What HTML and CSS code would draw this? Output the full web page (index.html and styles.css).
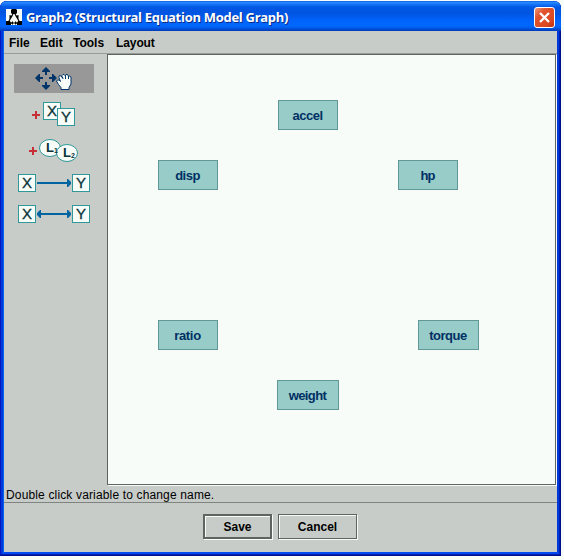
FILE: index.html
```html
<!DOCTYPE html>
<html lang="en">
<head>
<meta charset="utf-8">
<title>Graph2 (Structural Equation Model Graph)</title>
<link rel="stylesheet" href="styles.css">
</head>
<body>
<div class="window">
  <header class="titlebar">
    <svg class="app-icon" width="16" height="16" viewBox="0 0 16 16">
      <rect width="16" height="16" fill="#f8fcf8"/>
      <path d="M7 5L3 12M9 5L13 12M4 14H12" stroke="#000" stroke-width="1.200" fill="none"/>
      <path d="M6 0h4l1 1v3l-1 1h-4l-1-1v-3zM3.500 6l3 1-3 3zM12.500 6l-3 1 3 3zM0 12h4l1 2v2h-5zM16 12h-4l-1 2v2h5zM5 14l2-2v4zM11 14l-2-2v4z" fill="#000"/>
    </svg>
    <span class="title">Graph2 (Structural Equation Model Graph)</span>
    <button class="close" aria-label="Close">
      <svg width="19" height="19" viewBox="0 0 19 19"><path d="M5 5L14 14M14 5L5 14" stroke="#fff" stroke-width="2.300"/></svg>
    </button>
  </header>
  <div class="client">
    <nav class="menubar">
      <span class="m-file">File</span><span class="m-edit">Edit</span><span class="m-tools">Tools</span><span class="m-layout">Layout</span>
    </nav>
    <main class="workspace">
      <aside class="tools">
        <svg class="tool selected" width="80" height="29" viewBox="0 0 80 29">
          <g fill="#003468">
            <path d="M32 3l4 4v1h-3v3h-2v-3h-3v-1zM32 26l4-4v-1h-3v-3h-2v3h-3v1zM21 14l4-4h1v3h3v2h-3v3h-1zM43 14l-4-4h-1v3h-3v2h3v3h1z"/>
          </g>
          <path d="M47 25.500v-2l-2.500-3-2-3.500 1-1h1.500l1.500 1.500-1.500-4v-1.500l1-.5 1.500 1 .5 1v-2l1-1h1l1 1 1-1h1.500l1 2 1-.5 1.500 1v7l-2 3.500v2z" fill="#f8fcf8" stroke="#003468" stroke-width="1"/>
          <path d="M48.500 13l.5 2M51.500 11v4M54.500 12v3" stroke="#003468" stroke-width="1"/>
        </svg>
        <svg class="tool t-measured" width="80" height="28" viewBox="0 0 80 28">
          <path d="M18 15h8M22 11v8" stroke="#c83038" stroke-width="2"/>
          <g class="boxes"><rect x="29.500" y="2.500" width="17" height="17"/><rect x="43.500" y="8.500" width="17" height="17"/></g>
          <g class="letters"><text x="38" y="16">X</text><text x="52" y="22">Y</text></g>
        </svg>
        <svg class="tool t-latent" width="80" height="26" viewBox="0 0 80 26">
          <path d="M15 14h8M19 10v8" stroke="#c83038" stroke-width="2"/>
          <g class="boxes"><ellipse cx="36" cy="11" rx="10.500" ry="8.500"/><ellipse cx="53" cy="16" rx="10.500" ry="8.500"/></g>
          <g class="latent"><text x="32" y="15">L</text><text x="49" y="20">L</text></g>
          <g class="subs"><text x="40" y="16">1</text><text x="57" y="21">2</text></g>
        </svg>
        <svg class="tool t-directed" width="80" height="20" viewBox="0 0 80 20">
          <g class="boxes"><rect x="4.500" y="1.500" width="17" height="17"/><rect x="58.500" y="1.500" width="17" height="17"/></g>
          <g class="letters"><text x="13" y="15">X</text><text x="67" y="15">Y</text></g>
          <path d="M23 9h30v-3h1l3 3v2l-3 3h-1v-3h-30z" fill="#0064a0"/>
        </svg>
        <svg class="tool t-bidirected" width="80" height="20" viewBox="0 0 80 20">
          <g class="boxes"><rect x="4.500" y="1.500" width="17" height="17"/><rect x="58.500" y="1.500" width="17" height="17"/></g>
          <g class="letters"><text x="13" y="15">X</text><text x="67" y="15">Y</text></g>
          <path d="M23 9l3-3h1v3h26v-3h1l3 3v2l-3 3h-1v-3h-26v3h-1l-3-3z" fill="#0064a0"/>
        </svg>
      </aside>
      <section class="canvas">
        <div class="node accel">accel</div>
        <div class="node disp">disp</div>
        <div class="node hp">hp</div>
        <div class="node ratio">ratio</div>
        <div class="node torque">torque</div>
        <div class="node weight">weight</div>
      </section>
    </main>
    <div class="status"><span>Double click variable to change name.</span></div>
    <footer class="actions">
      <button class="btn save">Save</button>
      <button class="btn cancel">Cancel</button>
    </footer>
  </div>
</div>
</body>
</html>
```
FILE: styles.css
```css
* { box-sizing: border-box; }
body {
  margin: 0;
  height: 560px;
  overflow: hidden;
  background: #f8fcf8;
  font: bold 12px "Liberation Sans", Arial, sans-serif;
  color: #000;
}
button { font: inherit; color: inherit; padding: 0; }
.window {
  width: 561px;
  height: 555px;
  margin-top: 1px;
  padding: 0 4px 4px;
  border-radius: 7px 7px 0 0;
  background: #0038dc;
  box-shadow: inset 1px 0 #0018c0, inset -1px -1px #00108c, inset -2px -2px #0020b0, inset 3px 0 #0038dc, inset 4px 0 #0064f0, inset 0 -4px #0048f0;
}
.titlebar {
  display: flex;
  align-items: center;
  height: 30px;
  margin: 0 -4px;
  padding: 2px 6px 0;
  border-radius: 7px 7px 0 0;
  background: linear-gradient(#0048d0 0, #2c8cff 1px, #1878f8 3px, #0058e4 6px, #0054e0 12px, #0064fc 20px, #0068ff 25px, #0050d8 28px, #0038b8 30px);
}
.app-icon { flex: none; }
.title {
  flex: 1;
  margin-left: 4px;
  white-space: nowrap;
  color: #fff;
  font: bold 13px "Open Sans", sans-serif;
  letter-spacing: -0.29px;
  text-shadow: 1px 1px #082c88;
}
.close {
  width: 21px;
  height: 21px;
  border: 1px solid #fff;
  border-radius: 3px;
  background: linear-gradient(135deg, #f09878, #e05430 30%, #dc4820 75%, #b83010);
}
.close svg { display: block; }
.client { display: flex; flex-direction: column; height: 521px; background: #c8ccc8; }
.menubar {
  display: flex;
  height: 23px;
  padding: 4px 5px 0;
  border-bottom: 1px solid #989c98;
  line-height: 16px;
}
.m-file { width: 31px; }
.m-edit { width: 33px; }
.m-tools { width: 43px; }
.m-layout { letter-spacing: -0.1px; }
.workspace { display: flex; height: 432px; }
.tools {
  display: flex;
  flex-direction: column;
  align-items: flex-start;
  width: 103px;
  padding: 10px 0 0 10px;
}
.tool { flex: none; display: block; }
.selected { background: #989898; }
.t-measured { margin-top: 7px; }
.t-latent { margin-top: 9px; }
.t-directed { margin-top: 10px; }
.t-bidirected { margin-top: 11px; }
.boxes { fill: #f8fcf8; stroke: #309898; }
.letters, .latent, .subs { font-family: "Liberation Sans", Arial, sans-serif; fill: #083438; }
.letters { font-size: 15px; font-weight: normal; text-anchor: middle; stroke: #083438; stroke-width: 0.3px; }
.latent { font-size: 13px; }
.subs { font-size: 7px; }
.canvas {
  position: relative;
  width: 449px;
  margin-bottom: 1px;
  border: 1px solid #606460;
  background: #f8fcf8;
  box-shadow: 1px 1px #f8fcf8;
}
.node {
  position: absolute;
  width: 60px;
  height: 30px;
  padding-right: 1px;
  border: 1px solid #609898;
  background: #98ccc8;
  color: #003064;
  text-align: center;
  line-height: 29px;
  font-size: 13px;
}
.accel { left: 170px; top: 45px; letter-spacing: -0.5px; }
.disp { left: 50px; top: 105px; letter-spacing: -0.5px; }
.hp { left: 290px; top: 105px; letter-spacing: -1px; }
.ratio { left: 50px; top: 265px; letter-spacing: -0.3px; }
.torque { left: 310px; top: 265px; width: 61px; letter-spacing: -0.5px; }
.weight { left: 169px; top: 325px; width: 62px; letter-spacing: -0.6px; }
.status {
  height: 17px;
  padding-left: 2px;
  border-bottom: 1px solid #808480;
  font-weight: normal;
  line-height: 18px;
  letter-spacing: 0.15px;
}
.actions { display: flex; gap: 6px; padding: 11px 0 0 199px; }
.btn {
  height: 25px;
  background: #c8ccc8;
  border: 1px solid #606460;
  box-shadow: inset 1px 1px #f8fcf8, 1px 1px #f8fcf8;
}
.save { width: 69px; border-width: 2px; }
.cancel { width: 79px; }
```
